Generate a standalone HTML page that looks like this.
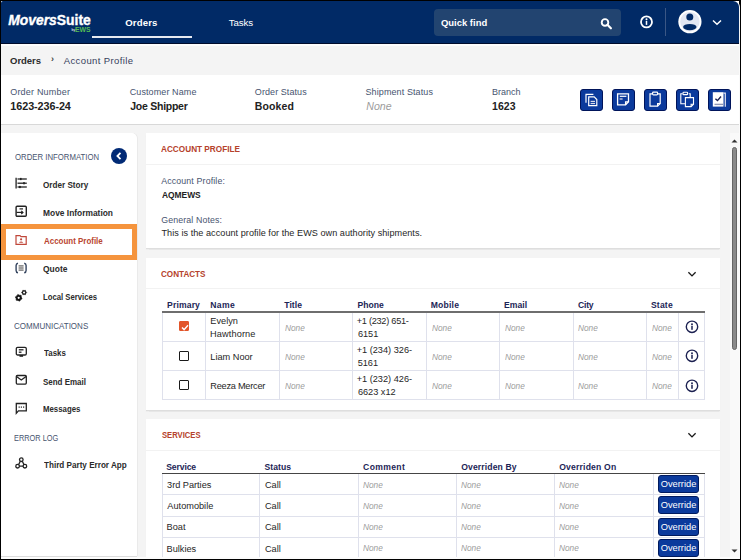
<!DOCTYPE html>
<html><head><meta charset="utf-8">
<style>
*{margin:0;padding:0;box-sizing:border-box}
html,body{width:741px;height:560px;overflow:hidden}
body{font-family:"Liberation Sans",sans-serif;position:relative;background:#000}
.a{position:absolute;white-space:nowrap;line-height:1}
.r{position:absolute}
.lbl{color:#4d5a75}
.val{color:#222;font-weight:bold}
.none{color:#a0a0a0;font-style:italic}
.sec{color:#b8432c;font-weight:bold;font-size:8.2px}
.th{color:#1c2758;font-weight:bold;font-size:8.8px}
.mi{color:#2a2a2a;font-weight:bold;font-size:8.1px}
.sg{color:#56607a;font-size:7.9px}
.td{color:#2a2a2a;font-size:9px}
.card{position:absolute;background:#fff;box-shadow:0 1px 0 #dedede,0 1.5px 1px rgba(0,0,0,.05)}
.vl{position:absolute;width:1px;background:#dfe1ec}
.hl{position:absolute;height:1px;background:#dfe1ec}
.btn{position:absolute;left:658px;width:41px;height:18px;background:#0b3a9c;border:1px solid #001a5e;border-radius:3px;color:#fff;font-size:9.3px;line-height:16px;text-align:center}
.ibtn{position:absolute;top:88.5px;width:22.5px;height:22.5px;background:#0b3a9c;border:1.5px solid #00145a;border-radius:3px}
svg{position:absolute;overflow:visible}
.chk{position:absolute;left:179px;width:10px;height:10px;border:1.5px solid #1a1a1a;border-radius:1px;background:#fff}
.chk.on{background:#e2552a;border-color:#e2552a}

</style></head><body>
<!-- app frame -->
<div class="r" style="left:1px;top:1px;width:739px;height:558px;background:#f4f4f4;border-top-right-radius:6px;border-top-left-radius:2px;overflow:hidden">
</div>
<!-- header -->
<div class="r" style="left:731px;top:1px;width:8px;height:8px;background:#fff"></div>
<div class="r" style="left:1px;top:1px;width:4px;height:4px;background:#fff"></div>
<div class="r" style="left:1px;top:1px;width:738px;height:42px;background:#012a66;border-top-right-radius:6px;border-top-left-radius:2px"></div>
<div class="a" style="left:8.2px;top:14.1px;font-size:13.9px;color:#fff;font-weight:bold;-webkit-text-stroke:0.35px #fff"><i>Movers</i>Suite</div>
<div class="a" style="left:71.5px;top:28.6px;font-size:3.6px;color:#fff">by</div>
<div class="a" style="left:75.2px;top:27px;font-size:6.6px;color:#55bb55;font-weight:bold;transform:scaleX(1.04);transform-origin:0 0">EWS</div>
<div class="r" style="left:92px;top:36px;width:100px;height:2px;background:#e6e9f0"></div>
<div class="r" style="left:434px;top:9px;width:187px;height:27px;background:#224470;border-radius:4px"></div>
<svg style="left:600px;top:18px" width="13" height="11" viewBox="0 0 13 11"><circle cx="5" cy="4.4" r="3.3" fill="none" stroke="#fff" stroke-width="1.9"/><path d="M7.4 6.8 L10.9 10.3" stroke="#fff" stroke-width="2.2" stroke-linecap="round"/></svg>
<svg style="left:640px;top:15px" width="14" height="14" viewBox="0 0 14 14"><circle cx="6.5" cy="6.9" r="5.5" fill="none" stroke="#fff" stroke-width="1.8"/><circle cx="6.5" cy="4.3" r="1" fill="#fff"/><rect x="5.75" y="5.9" width="1.5" height="4" fill="#fff"/></svg>
<div class="r" style="left:665px;top:8px;width:1px;height:28px;background:#3b5785"></div>
<svg style="left:678px;top:9.5px" width="24" height="24" viewBox="0 0 24 24"><circle cx="11.9" cy="11.7" r="11.6" fill="#fff"/><circle cx="11.9" cy="11.7" r="9.7" fill="#e2e7f2"/><circle cx="11.8" cy="6.9" r="3.5" fill="#012a66"/><ellipse cx="11.8" cy="17.1" rx="6.7" ry="3.2" fill="#012a66"/></svg>
<svg style="left:712px;top:19px" width="10" height="7" viewBox="0 0 10 7"><path d="M1 1.5 L5 5.2 L9 1.5" fill="none" stroke="#fff" stroke-width="1.5"/></svg>

<!-- breadcrumb -->
<div class="r" style="left:1px;top:43px;width:738px;height:32px;background:#f4f4f4"></div>
<div class="r" style="left:1px;top:43px;width:738px;height:1px;background:#000c2c"></div>
<div class="r" style="left:1px;top:44px;width:738px;height:2px;background:#fdfdfd"></div>
<div class="a" style="left:51px;top:55px;font-size:9px;color:#444;font-weight:bold">›</div>

<!-- order info -->
<div class="r" style="left:1px;top:75px;width:738px;height:50px;background:#fff;border-bottom:1px solid #d8d8d8"></div>
<div class="ibtn" style="left:580px"></div>
<div class="ibtn" style="left:612px"></div>
<div class="ibtn" style="left:644px"></div>
<div class="ibtn" style="left:676px"></div>
<div class="ibtn" style="left:708px"></div>

<!-- sidebar -->
<div class="r" style="left:1px;top:133px;width:136px;height:423px;background:#fff;border-top-right-radius:5px;box-shadow:0.6px 0 0 #e2e2e2,0 1px 0 #dcdcdc"></div>
<svg style="left:111px;top:148px" width="16" height="16" viewBox="0 0 16 16"><circle cx="8" cy="8" r="8" fill="#012a75"/><path d="M9.5 4.8 L6.4 8 L9.5 11.2" fill="none" stroke="#fff" stroke-width="1.8"/></svg>

<div class="r" style="left:1px;top:224px;width:136px;height:36px;border:5px solid #f5943d"></div>

<!-- sidebar icons -->
<svg style="left:14px;top:177px" width="14" height="13" viewBox="0 0 14 13"><g fill="none" stroke="#222" stroke-width="1.3"><path d="M2.1 0.8 V11.5"/><path d="M3.5 2 H12.8"/><path d="M3.5 6.2 H12.8"/><path d="M3.5 10 H12.8"/></g><g fill="#222"><rect x="6" y="0.9" width="1.6" height="2.2"/><rect x="9.2" y="5.1" width="1.6" height="2.2"/><rect x="5" y="8.9" width="1.8" height="2.2"/></g></svg>
<svg style="left:14px;top:205px" width="14" height="13" viewBox="0 0 14 13"><g fill="none" stroke="#222"><rect x="2.1" y="1.3" width="10.2" height="10" rx="1" stroke-width="1.4"/><path d="M5.5 3.9 H9" stroke-width="1.2"/><path d="M2.5 7.4 H9" stroke-width="1.2"/><path d="M7.2 5.8 L9 7.4 L7.2 9" stroke-width="1.1"/></g></svg>
<svg style="left:14px;top:234px" width="14" height="12" viewBox="0 0 14 12"><g fill="none" stroke="#c0473a" stroke-width="1.2"><path d="M2 1.6 H6 L7 2.6 H12.2 V10.3 H2 Z"/></g><circle cx="7.1" cy="5.3" r="1.1" fill="#c0473a"/><path d="M4.9 8.7 Q7.1 6.5 9.3 8.7 Z" fill="#c0473a"/></svg>
<svg style="left:14px;top:262px" width="14" height="12" viewBox="0 0 14 12"><g fill="none" stroke="#34445f" stroke-width="1.4"><path d="M4 1.3 Q2.1 1.6 2.1 3.6 V8.4 Q2.1 10.4 4 10.7"/><path d="M10.2 1.3 Q12.1 1.6 12.1 3.6 V8.4 Q12.1 10.4 10.2 10.7"/></g><g stroke="#6a6a6a" stroke-width="1.3"><path d="M4.6 3.9 H9.6"/><path d="M4.6 6 H9.6"/><path d="M4.6 8.1 H9.6"/></g></svg>
<svg style="left:14px;top:289px" width="14" height="13" viewBox="0 0 14 13"><polygon points="8.08,9.70 6.61,10.71 5.61,12.18 4.01,11.41 2.23,11.28 2.09,9.50 1.32,7.90 2.79,6.89 3.79,5.42 5.39,6.19 7.17,6.32 7.31,8.10" fill="#111" stroke="#111" stroke-width="0.6" stroke-linejoin="round"/><circle cx="4.7" cy="8.8" r="1.1" fill="#fff"/><polygon points="12.70,3.50 11.83,4.50 11.40,5.75 10.10,5.50 8.80,5.75 8.37,4.50 7.50,3.50 8.37,2.50 8.80,1.25 10.10,1.50 11.40,1.25 11.83,2.50" fill="#111" stroke="#111" stroke-width="0.5" stroke-linejoin="round"/><circle cx="10.1" cy="3.5" r="1.1" fill="#fff"/></svg>
<svg style="left:14px;top:346px" width="14" height="12" viewBox="0 0 14 12"><g fill="none" stroke="#222" stroke-width="1.3"><rect x="2.3" y="1.4" width="10" height="7.6" rx="1.3"/><path d="M4.8 3.8 H9.5"/><path d="M4.8 6.2 H7.5"/></g><rect x="5.5" y="9" width="3.6" height="1.8" fill="#222"/></svg>
<svg style="left:14px;top:374px" width="14" height="12" viewBox="0 0 14 12"><g fill="none" stroke="#222" stroke-width="1.3"><rect x="2.3" y="1.5" width="10" height="8.6" rx="1"/><path d="M2.5 2.5 L7.3 6 L12.1 2.5"/></g></svg>
<svg style="left:14px;top:402px" width="14" height="13" viewBox="0 0 14 13"><g fill="none" stroke="#222" stroke-width="1.3"><path d="M2.3 1.5 H12.3 V8.8 H4.4 L2.3 11.3 Z"/></g><g fill="#222"><rect x="4.6" y="4.5" width="1.2" height="1.2"/><rect x="6.8" y="4.5" width="1.2" height="1.2"/><rect x="9" y="4.5" width="1.2" height="1.2"/></g></svg>
<svg style="left:14px;top:457px" width="14" height="13" viewBox="0 0 14 13"><g fill="none" stroke="#222" stroke-width="1.3"><circle cx="7.3" cy="2.7" r="1.8"/><circle cx="3.6" cy="9.2" r="1.8"/><circle cx="10.9" cy="9.2" r="1.8"/><path d="M6.3 4.3 L4.6 7.6 M8.3 4.3 L10 7.6 M5.4 9.2 H9.1"/></g></svg>
<!-- order action icons -->
<svg style="left:580px;top:88px" width="22" height="22" viewBox="0 0 22 22"><g fill="none" stroke="#fff" stroke-width="1.2"><path d="M6 14.8 V6.3 H13.4"/><path d="M8.7 17.6 V8.9 H14.2 L16.8 11.5 V17.6 Z"/></g><g stroke="#d6daea" stroke-width="1.2"><path d="M10.6 13.4 H15"/><path d="M10.6 15.5 H15"/></g></svg>
<svg style="left:612px;top:88px" width="22" height="22" viewBox="0 0 22 22"><g fill="none" stroke="#fff" stroke-width="1.3"><path d="M5.6 5.8 H16.5 V13.8 L13.6 16.8 H5.6 Z"/><path d="M13.6 16.8 V13.8 H16.5"/></g><g stroke="#fff" stroke-width="1.2"><path d="M7.8 8.3 H14.4"/></g><rect x="7.6" y="10.3" width="3" height="1.4" fill="#c9cee0"/></svg>
<svg style="left:644px;top:88px" width="22" height="22" viewBox="0 0 22 22"><g fill="none" stroke="#fff" stroke-width="1.2"><path d="M8 5.8 H6 V18.2 H13.6 L16.2 15.6 V5.8 H14"/><rect x="8.6" y="4.2" width="5" height="2.6" rx="0.8"/><path d="M13.6 18.2 V15.6 H16.2"/></g></svg>
<svg style="left:676px;top:88px" width="22" height="22" viewBox="0 0 22 22"><g fill="none" stroke="#fff" stroke-width="1.1"><path d="M6.5 5.8 H4.8 V15.8 H9.2"/><path d="M12.8 5.8 H14.2 V9.4"/><rect x="7" y="4.3" width="4.6" height="2.3" rx="0.7"/><path d="M9.4 9.6 H17.5 V16.2 L15.1 18.6 H9.4 Z"/><path d="M15.1 18.6 V16.2 H17.5"/></g></svg>
<svg style="left:708px;top:88px" width="22" height="22" viewBox="0 0 22 22"><path d="M4.8 4.2 H15.5 V18.6 H4.8 Z" fill="#fff"/><path d="M15.5 5.2 H17.3 V18.8" fill="none" stroke="#dfe3f2" stroke-width="1.2"/><path d="M6.5 16.4 H15" stroke="#8d96b5" stroke-width="1.4"/><path d="M7.4 10.8 L9.5 12.6 L13 8.5" fill="none" stroke="#1b2050" stroke-width="1.4"/></svg>
<!-- card 1 -->
<div class="card" style="left:146px;top:133px;width:574px;height:115px"></div>
<div class="hl" style="left:146px;top:164px;width:574px;background:#f2f2f2"></div>

<!-- card 2 -->
<div class="card" style="left:146px;top:258px;width:574px;height:152px"></div>
<svg style="left:687px;top:271px" width="10" height="7" viewBox="0 0 10 7"><path d="M1.4 1.3 L5 4.9 L8.6 1.3" fill="none" stroke="#1a1a1a" stroke-width="1.35"/></svg>
<div class="hl" style="left:146px;top:288px;width:574px;background:#f2f2f2"></div>
<div class="r" style="left:162px;top:312px;width:543px;height:88px;border:1px solid #dfe1ec;border-top:none"></div>
<div class="r" style="left:162px;top:311px;width:543px;height:2px;background:#6e6e6e"></div>
<div class="hl" style="left:162px;top:341px;width:543px"></div>
<div class="hl" style="left:162px;top:370px;width:543px"></div>
<div class="vl" style="left:205px;top:313px;height:86px"></div>
<div class="vl" style="left:279px;top:313px;height:86px"></div>
<div class="vl" style="left:352px;top:313px;height:86px"></div>
<div class="vl" style="left:426px;top:313px;height:86px"></div>
<div class="vl" style="left:499px;top:313px;height:86px"></div>
<div class="vl" style="left:573px;top:313px;height:86px"></div>
<div class="vl" style="left:646px;top:313px;height:86px"></div>
<div class="vl" style="left:678px;top:313px;height:86px"></div>
<div class="chk on" style="top:321.1px"><svg style="left:1px;top:1.5px" width="8" height="7" viewBox="0 0 8 7"><path d="M1 3.4 L3.1 5.6 L7 1.2" fill="none" stroke="#fff" stroke-width="1.4"/></svg></div>
<svg style="left:684.5px;top:320.2px" width="14" height="14" viewBox="0 0 14 14"><circle cx="7" cy="6.8" r="5.7" fill="none" stroke="#1b2050" stroke-width="1.4"/><circle cx="7" cy="4.3" r="0.95" fill="#1b2050"/><rect x="6.25" y="5.8" width="1.5" height="4" fill="#1b2050"/></svg>
<div class="chk" style="top:350.5px"></div>
<svg style="left:684.5px;top:349.4px" width="14" height="14" viewBox="0 0 14 14"><circle cx="7" cy="6.8" r="5.7" fill="none" stroke="#1b2050" stroke-width="1.4"/><circle cx="7" cy="4.3" r="0.95" fill="#1b2050"/><rect x="6.25" y="5.8" width="1.5" height="4" fill="#1b2050"/></svg>
<div class="chk" style="top:379.8px"></div>
<svg style="left:684.5px;top:378.6px" width="14" height="14" viewBox="0 0 14 14"><circle cx="7" cy="6.8" r="5.7" fill="none" stroke="#1b2050" stroke-width="1.4"/><circle cx="7" cy="4.3" r="0.95" fill="#1b2050"/><rect x="6.25" y="5.8" width="1.5" height="4" fill="#1b2050"/></svg>

<!-- card 3 -->
<div class="card" style="left:146px;top:419px;width:574px;height:160px"></div>
<svg style="left:687px;top:432px" width="10" height="7" viewBox="0 0 10 7"><path d="M1.4 1.3 L5 4.9 L8.6 1.3" fill="none" stroke="#1a1a1a" stroke-width="1.35"/></svg>
<div class="hl" style="left:146px;top:450px;width:574px;background:#f2f2f2"></div>
<div class="r" style="left:162px;top:474px;width:543px;height:90px;border:1px solid #dfe1ec;border-top:none"></div>
<div class="r" style="left:162px;top:473px;width:543px;height:1px;background:#454545"></div>
<div class="hl" style="left:162px;top:494px;width:543px"></div>
<div class="hl" style="left:162px;top:516px;width:543px"></div>
<div class="hl" style="left:162px;top:537px;width:543px"></div>
<div class="vl" style="left:259px;top:474px;height:90px"></div>
<div class="vl" style="left:358px;top:474px;height:90px"></div>
<div class="vl" style="left:456px;top:474px;height:90px"></div>
<div class="vl" style="left:554px;top:474px;height:90px"></div>
<div class="vl" style="left:653px;top:474px;height:90px"></div>

<div class="btn" style="top:475.1px">Override</div>
<div class="btn" style="top:496.3px">Override</div>
<div class="btn" style="top:517.8px">Override</div>
<div class="btn" style="top:539.2px">Override</div>

<!-- scrollbar -->
<div class="r" style="left:730px;top:133px;width:9px;height:425px;background:#f9f9f9"></div>
<svg style="left:731px;top:139px" width="7" height="4" viewBox="0 0 7 4"><path d="M0.5 3.5 L3.5 0.5 L6.5 3.5Z" fill="#333"/></svg>
<div class="r" style="left:731.5px;top:147px;width:5.6px;height:203px;background:#8a8a8a;border:0.8px solid #666;border-radius:3px"></div>
<svg style="left:731px;top:548.8px" width="7" height="4" viewBox="0 0 7 4"><path d="M0.5 0.5 L3.5 3.5 L6.5 0.5Z" fill="#333"/></svg>
<div class="a" style="left:125.26px;top:18.00px;font-size:9.6px;font-weight:bold;color:#fff;letter-spacing:0.144px;">Orders</div>
<div class="a" style="left:228.73px;top:18.00px;font-size:9.7px;color:#fff;letter-spacing:-0.099px;">Tasks</div>
<div class="a" style="left:440.94px;top:17.81px;font-size:9.4px;font-weight:bold;color:#fff;letter-spacing:0.000px;transform:scaleX(1.0074);transform-origin:0 0;">Quick find</div>
<div class="a" style="left:10.06px;top:56.00px;font-size:9.5px;font-weight:bold;color:#2b2b2b;letter-spacing:-0.051px;">Orders</div>
<div class="a" style="left:63.75px;top:56.00px;font-size:9.5px;color:#34405c;letter-spacing:0.379px;">Account Profile</div>
<div class="a" style="left:10.23px;top:88.01px;font-size:9px;color:#47546f;letter-spacing:0.199px;">Order Number</div>
<div class="a" style="left:129.71px;top:88.01px;font-size:9px;color:#47546f;letter-spacing:0.098px;">Customer Name</div>
<div class="a" style="left:254.87px;top:88.01px;font-size:9px;color:#47546f;letter-spacing:0.071px;">Order Status</div>
<div class="a" style="left:365.46px;top:88.01px;font-size:9px;color:#47546f;letter-spacing:0.104px;">Shipment Status</div>
<div class="a" style="left:492.04px;top:88.01px;font-size:9px;color:#47546f;letter-spacing:-0.023px;">Branch</div>
<div class="a" style="left:10.37px;top:101.00px;font-size:10.8px;font-weight:bold;color:#222;letter-spacing:-0.075px;">1623-236-24</div>
<div class="a" style="left:130.28px;top:101.01px;font-size:10.5px;font-weight:bold;color:#222;letter-spacing:-0.260px;">Joe Shipper</div>
<div class="a" style="left:254.79px;top:101.01px;font-size:10.5px;font-weight:bold;color:#222;letter-spacing:0.119px;">Booked</div>
<div class="a" style="left:366.23px;top:101.01px;font-size:10.6px;font-style:italic;color:#9c9c9c;letter-spacing:0.053px;">None</div>
<div class="a" style="left:492.02px;top:101.01px;font-size:10.5px;font-weight:bold;color:#222;letter-spacing:0.047px;">1623</div>
<div class="a" style="left:14.52px;top:153.31px;font-size:8.6px;color:#47546f;letter-spacing:0.000px;transform:scaleX(0.9053);transform-origin:0 0;">ORDER INFORMATION</div>
<div class="a" style="left:14.30px;top:321.81px;font-size:8.6px;color:#47546f;letter-spacing:0.000px;transform:scaleX(0.9331);transform-origin:0 0;">COMMUNICATIONS</div>
<div class="a" style="left:13.82px;top:433.50px;font-size:8.6px;color:#47546f;letter-spacing:0.000px;transform:scaleX(0.8584);transform-origin:0 0;">ERROR LOG</div>
<div class="a" style="left:43.33px;top:181.00px;font-size:8.9px;font-weight:bold;color:#2b2b2b;letter-spacing:0.000px;transform:scaleX(0.9159);transform-origin:0 0;">Order Story</div>
<div class="a" style="left:43.43px;top:209.21px;font-size:8.9px;font-weight:bold;color:#2b2b2b;letter-spacing:0.000px;transform:scaleX(0.9465);transform-origin:0 0;">Move Information</div>
<div class="a" style="left:43.78px;top:237.31px;font-size:8.9px;font-weight:bold;color:#b9452f;letter-spacing:0.000px;transform:scaleX(0.8956);transform-origin:0 0;">Account Profile</div>
<div class="a" style="left:43.39px;top:265.00px;font-size:8.9px;font-weight:bold;color:#2b2b2b;letter-spacing:0.000px;transform:scaleX(0.9530);transform-origin:0 0;">Quote</div>
<div class="a" style="left:43.19px;top:293.21px;font-size:8.9px;font-weight:bold;color:#2b2b2b;letter-spacing:0.000px;transform:scaleX(0.8694);transform-origin:0 0;">Local Services</div>
<div class="a" style="left:43.53px;top:349.21px;font-size:8.9px;font-weight:bold;color:#2b2b2b;letter-spacing:0.000px;transform:scaleX(0.8911);transform-origin:0 0;">Tasks</div>
<div class="a" style="left:43.14px;top:377.50px;font-size:8.9px;font-weight:bold;color:#2b2b2b;letter-spacing:0.000px;transform:scaleX(0.8983);transform-origin:0 0;">Send Email</div>
<div class="a" style="left:42.88px;top:405.21px;font-size:8.9px;font-weight:bold;color:#2b2b2b;letter-spacing:0.000px;transform:scaleX(0.8813);transform-origin:0 0;">Messages</div>
<div class="a" style="left:43.53px;top:461.00px;font-size:8.9px;font-weight:bold;color:#2b2b2b;letter-spacing:0.000px;transform:scaleX(0.9155);transform-origin:0 0;">Third Party Error App</div>
<div class="a" style="left:161.38px;top:145.23px;font-size:9.3px;font-weight:bold;color:#b5412b;letter-spacing:0.000px;transform:scaleX(0.8839);transform-origin:0 0;">ACCOUNT PROFILE</div>
<div class="a" style="left:161.16px;top:177.00px;font-size:8.8px;color:#47546f;letter-spacing:0.145px;">Account Profile:</div>
<div class="a" style="left:161.99px;top:190.81px;font-size:9.3px;font-weight:bold;color:#222;letter-spacing:0.000px;transform:scaleX(0.9025);transform-origin:0 0;">AQMEWS</div>
<div class="a" style="left:161.33px;top:215.81px;font-size:8.8px;color:#47546f;letter-spacing:0.116px;">General Notes:</div>
<div class="a" style="left:161.50px;top:228.91px;font-size:9.1px;color:#262626;letter-spacing:0.044px;">This is the account profile for the EWS own authority shipments.</div>
<div class="a" style="left:161.47px;top:269.93px;font-size:9.3px;font-weight:bold;color:#b5412b;letter-spacing:0.000px;transform:scaleX(0.8730);transform-origin:0 0;">CONTACTS</div>
<div class="a" style="left:167.03px;top:301.31px;font-size:8.6px;font-weight:bold;color:#1c2556;letter-spacing:0.145px;">Primary</div>
<div class="a" style="left:210.28px;top:301.31px;font-size:8.6px;font-weight:bold;color:#1c2556;letter-spacing:0.392px;">Name</div>
<div class="a" style="left:284.21px;top:301.31px;font-size:8.6px;font-weight:bold;color:#1c2556;letter-spacing:0.094px;">Title</div>
<div class="a" style="left:357.41px;top:301.31px;font-size:8.6px;font-weight:bold;color:#1c2556;letter-spacing:0.055px;">Phone</div>
<div class="a" style="left:430.63px;top:301.31px;font-size:8.6px;font-weight:bold;color:#1c2556;letter-spacing:0.234px;">Mobile</div>
<div class="a" style="left:504.09px;top:301.31px;font-size:8.6px;font-weight:bold;color:#1c2556;letter-spacing:0.039px;">Email</div>
<div class="a" style="left:577.95px;top:301.31px;font-size:8.6px;font-weight:bold;color:#1c2556;letter-spacing:-0.182px;">City</div>
<div class="a" style="left:650.93px;top:301.31px;font-size:8.6px;font-weight:bold;color:#1c2556;letter-spacing:0.193px;">State</div>
<div class="a" style="left:210.30px;top:316.81px;font-size:9.2px;color:#262626;letter-spacing:0.000px;">Evelyn</div>
<div class="a" style="left:210.12px;top:329.90px;font-size:9.2px;color:#262626;letter-spacing:0.114px;">Hawthorne</div>
<div class="a" style="left:356.67px;top:316.81px;font-size:9.2px;color:#262626;letter-spacing:-0.266px;">+1 (232) 651-</div>
<div class="a" style="left:357.88px;top:329.90px;font-size:9.2px;color:#262626;letter-spacing:0.000px;">6151</div>
<div class="a" style="left:284.99px;top:323.61px;font-size:8.7px;font-style:italic;color:#9c9c9c;letter-spacing:0.000px;transform:scaleX(0.9520);transform-origin:0 0;">None</div>
<div class="a" style="left:431.65px;top:323.61px;font-size:8.7px;font-style:italic;color:#9c9c9c;letter-spacing:0.000px;transform:scaleX(0.9520);transform-origin:0 0;">None</div>
<div class="a" style="left:504.75px;top:323.61px;font-size:8.7px;font-style:italic;color:#9c9c9c;letter-spacing:0.000px;transform:scaleX(0.9520);transform-origin:0 0;">None</div>
<div class="a" style="left:578.39px;top:323.61px;font-size:8.7px;font-style:italic;color:#9c9c9c;letter-spacing:0.000px;transform:scaleX(0.9520);transform-origin:0 0;">None</div>
<div class="a" style="left:651.87px;top:323.61px;font-size:8.7px;font-style:italic;color:#9c9c9c;letter-spacing:0.000px;transform:scaleX(0.9520);transform-origin:0 0;">None</div>
<div class="a" style="left:210.30px;top:353.00px;font-size:9.2px;color:#262626;letter-spacing:0.000px;">Liam Noor</div>
<div class="a" style="left:356.67px;top:346.11px;font-size:9.2px;color:#262626;letter-spacing:0.000px;">+1 (234) 326-</div>
<div class="a" style="left:357.63px;top:359.21px;font-size:9.2px;color:#262626;letter-spacing:0.000px;">5161</div>
<div class="a" style="left:284.99px;top:352.90px;font-size:8.7px;font-style:italic;color:#9c9c9c;letter-spacing:0.000px;transform:scaleX(0.9520);transform-origin:0 0;">None</div>
<div class="a" style="left:431.65px;top:352.90px;font-size:8.7px;font-style:italic;color:#9c9c9c;letter-spacing:0.000px;transform:scaleX(0.9520);transform-origin:0 0;">None</div>
<div class="a" style="left:504.75px;top:352.90px;font-size:8.7px;font-style:italic;color:#9c9c9c;letter-spacing:0.000px;transform:scaleX(0.9520);transform-origin:0 0;">None</div>
<div class="a" style="left:578.39px;top:352.90px;font-size:8.7px;font-style:italic;color:#9c9c9c;letter-spacing:0.000px;transform:scaleX(0.9520);transform-origin:0 0;">None</div>
<div class="a" style="left:651.87px;top:352.90px;font-size:8.7px;font-style:italic;color:#9c9c9c;letter-spacing:0.000px;transform:scaleX(0.9520);transform-origin:0 0;">None</div>
<div class="a" style="left:210.30px;top:382.21px;font-size:9.2px;color:#262626;letter-spacing:-0.243px;">Reeza Mercer</div>
<div class="a" style="left:356.67px;top:375.31px;font-size:9.2px;color:#262626;letter-spacing:0.000px;">+1 (232) 426-</div>
<div class="a" style="left:357.88px;top:388.40px;font-size:9.2px;color:#262626;letter-spacing:0.000px;">6623 x12</div>
<div class="a" style="left:284.99px;top:382.11px;font-size:8.7px;font-style:italic;color:#9c9c9c;letter-spacing:0.000px;transform:scaleX(0.9520);transform-origin:0 0;">None</div>
<div class="a" style="left:431.65px;top:382.11px;font-size:8.7px;font-style:italic;color:#9c9c9c;letter-spacing:0.000px;transform:scaleX(0.9520);transform-origin:0 0;">None</div>
<div class="a" style="left:504.75px;top:382.11px;font-size:8.7px;font-style:italic;color:#9c9c9c;letter-spacing:0.000px;transform:scaleX(0.9520);transform-origin:0 0;">None</div>
<div class="a" style="left:578.39px;top:382.11px;font-size:8.7px;font-style:italic;color:#9c9c9c;letter-spacing:0.000px;transform:scaleX(0.9520);transform-origin:0 0;">None</div>
<div class="a" style="left:651.87px;top:382.11px;font-size:8.7px;font-style:italic;color:#9c9c9c;letter-spacing:0.000px;transform:scaleX(0.9520);transform-origin:0 0;">None</div>
<div class="a" style="left:161.75px;top:431.12px;font-size:9.3px;font-weight:bold;color:#b5412b;letter-spacing:0.000px;transform:scaleX(0.8237);transform-origin:0 0;">SERVICES</div>
<div class="a" style="left:166.16px;top:463.10px;font-size:8.6px;font-weight:bold;color:#1c2556;letter-spacing:-0.101px;">Service</div>
<div class="a" style="left:264.40px;top:463.10px;font-size:8.6px;font-weight:bold;color:#1c2556;letter-spacing:0.083px;">Status</div>
<div class="a" style="left:363.10px;top:463.10px;font-size:8.6px;font-weight:bold;color:#1c2556;letter-spacing:0.340px;">Comment</div>
<div class="a" style="left:461.27px;top:463.10px;font-size:8.6px;font-weight:bold;color:#1c2556;letter-spacing:0.117px;">Overriden By</div>
<div class="a" style="left:559.16px;top:463.10px;font-size:8.6px;font-weight:bold;color:#1c2556;letter-spacing:0.195px;">Overriden On</div>
<div class="a" style="left:167.08px;top:480.81px;font-size:9.2px;color:#262626;letter-spacing:-0.019px;">3rd Parties</div>
<div class="a" style="left:264.95px;top:480.81px;font-size:9.2px;color:#262626;letter-spacing:0.000px;">Call</div>
<div class="a" style="left:363.24px;top:480.50px;font-size:8.7px;font-style:italic;color:#9c9c9c;letter-spacing:0.000px;transform:scaleX(0.9520);transform-origin:0 0;">None</div>
<div class="a" style="left:461.29px;top:480.50px;font-size:8.7px;font-style:italic;color:#9c9c9c;letter-spacing:0.000px;transform:scaleX(0.9520);transform-origin:0 0;">None</div>
<div class="a" style="left:558.93px;top:480.50px;font-size:8.7px;font-style:italic;color:#9c9c9c;letter-spacing:0.000px;transform:scaleX(0.9520);transform-origin:0 0;">None</div>
<div class="a" style="left:167.35px;top:502.00px;font-size:9.2px;color:#262626;letter-spacing:0.000px;">Automobile</div>
<div class="a" style="left:264.95px;top:502.00px;font-size:9.2px;color:#262626;letter-spacing:0.000px;">Call</div>
<div class="a" style="left:363.24px;top:501.70px;font-size:8.7px;font-style:italic;color:#9c9c9c;letter-spacing:0.000px;transform:scaleX(0.9520);transform-origin:0 0;">None</div>
<div class="a" style="left:461.29px;top:501.70px;font-size:8.7px;font-style:italic;color:#9c9c9c;letter-spacing:0.000px;transform:scaleX(0.9520);transform-origin:0 0;">None</div>
<div class="a" style="left:558.93px;top:501.70px;font-size:8.7px;font-style:italic;color:#9c9c9c;letter-spacing:0.000px;transform:scaleX(0.9520);transform-origin:0 0;">None</div>
<div class="a" style="left:166.57px;top:523.31px;font-size:9.2px;color:#262626;letter-spacing:0.000px;">Boat</div>
<div class="a" style="left:264.95px;top:523.31px;font-size:9.2px;color:#262626;letter-spacing:0.000px;">Call</div>
<div class="a" style="left:363.24px;top:523.00px;font-size:8.7px;font-style:italic;color:#9c9c9c;letter-spacing:0.000px;transform:scaleX(0.9520);transform-origin:0 0;">None</div>
<div class="a" style="left:461.29px;top:523.00px;font-size:8.7px;font-style:italic;color:#9c9c9c;letter-spacing:0.000px;transform:scaleX(0.9520);transform-origin:0 0;">None</div>
<div class="a" style="left:558.93px;top:523.00px;font-size:8.7px;font-style:italic;color:#9c9c9c;letter-spacing:0.000px;transform:scaleX(0.9520);transform-origin:0 0;">None</div>
<div class="a" style="left:166.57px;top:544.61px;font-size:9.2px;color:#262626;letter-spacing:0.000px;">Bulkies</div>
<div class="a" style="left:264.95px;top:544.61px;font-size:9.2px;color:#262626;letter-spacing:0.000px;">Call</div>
<div class="a" style="left:363.24px;top:544.32px;font-size:8.7px;font-style:italic;color:#9c9c9c;letter-spacing:0.000px;transform:scaleX(0.9520);transform-origin:0 0;">None</div>
<div class="a" style="left:461.29px;top:544.32px;font-size:8.7px;font-style:italic;color:#9c9c9c;letter-spacing:0.000px;transform:scaleX(0.9520);transform-origin:0 0;">None</div>
<div class="a" style="left:558.93px;top:544.32px;font-size:8.7px;font-style:italic;color:#9c9c9c;letter-spacing:0.000px;transform:scaleX(0.9520);transform-origin:0 0;">None</div>
<!-- frame overlay -->
<div class="r" style="left:1px;top:557px;width:739px;height:2px;background:#fcfcfc"></div>
<div class="r" style="left:739px;top:44px;width:1px;height:515px;background:#fafafa"></div>
<div class="r" style="left:0;top:559px;width:741px;height:1px;background:#000"></div>
<div class="r" style="left:740px;top:0;width:1px;height:560px;background:#000"></div>
<div class="r" style="left:0;top:0;width:741px;height:1px;background:#000"></div>
<div class="r" style="left:0;top:0;width:1px;height:560px;background:#000"></div>

</body></html>
